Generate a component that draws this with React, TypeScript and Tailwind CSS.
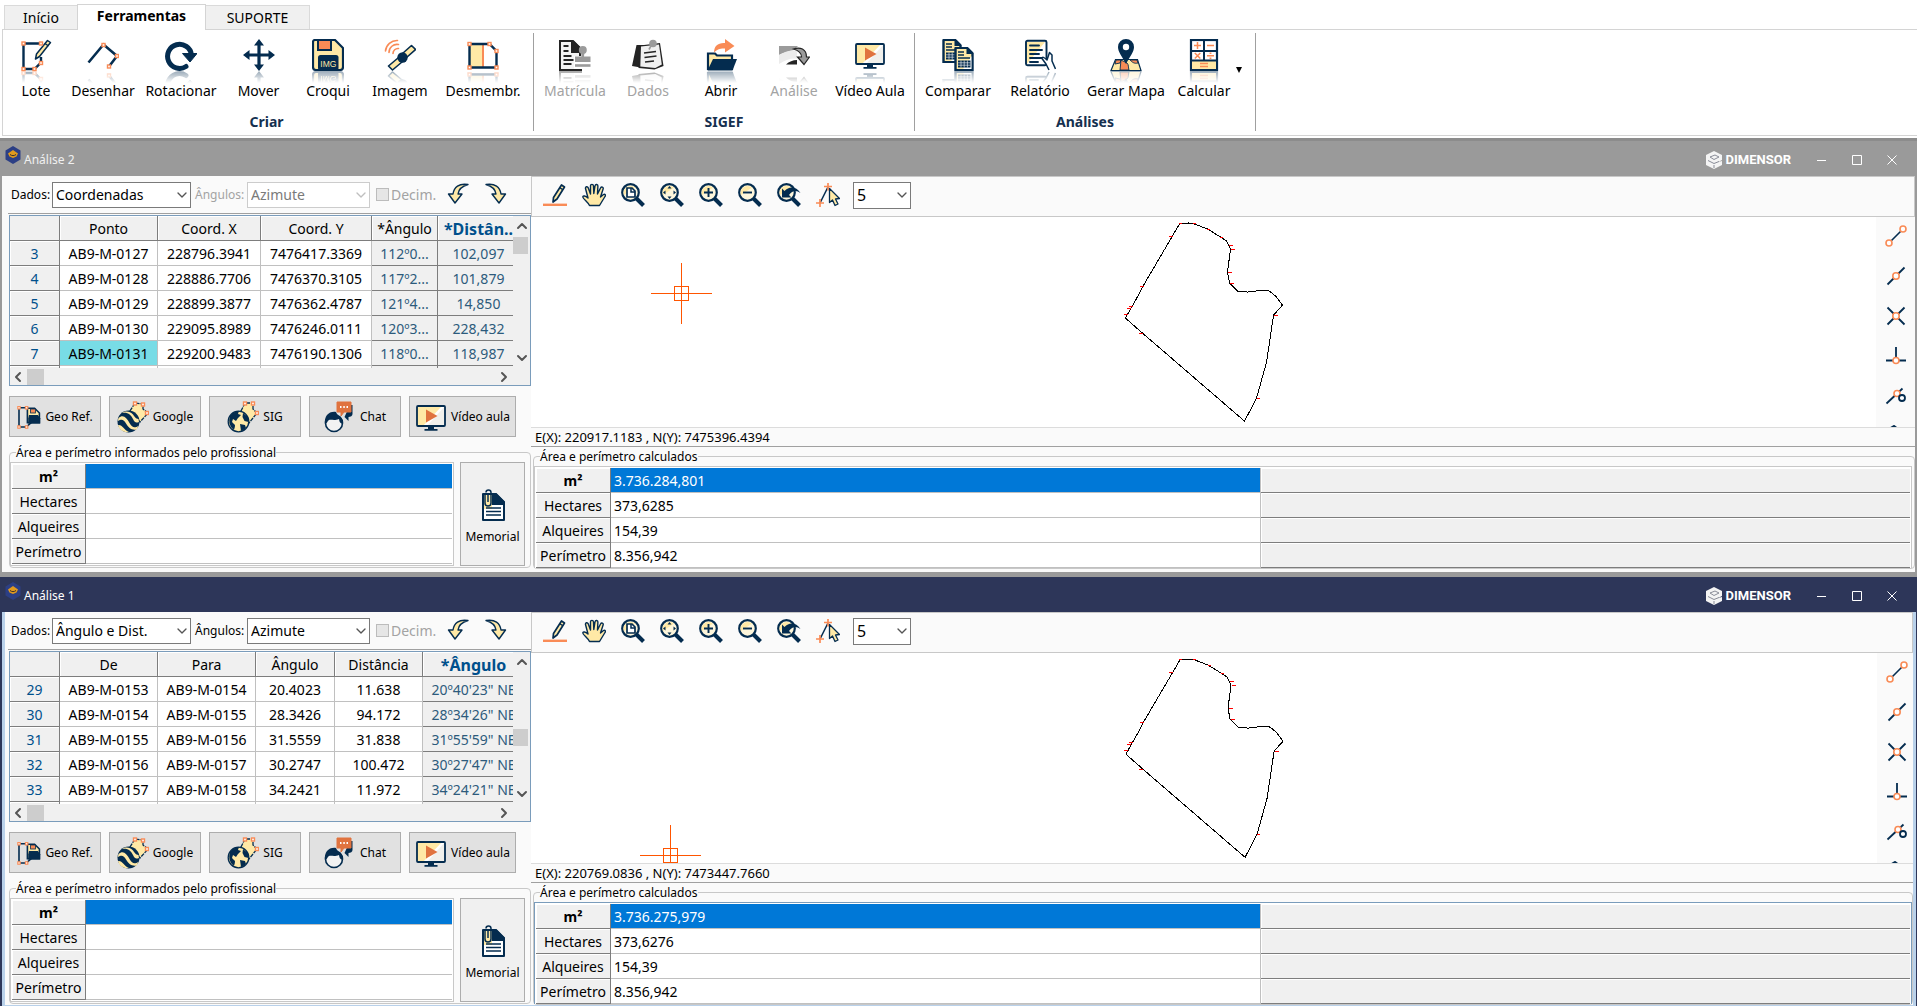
import { type ReactNode } from "react"
import { ChevronDown, ChevronLeft, ChevronRight, ChevronUp } from "lucide-react"
import clsx from "clsx"

const NAVY = "#042c4f"
const YELLOW = "#ffe9a6"
const ORANGE = "#f98b56"

/* ---------- icons ---------- */

interface IconProps {
  className?: string
}

function Svg({ children, className = "size-8", box = 32 }: { children: ReactNode; className?: string; box?: number }) {
  return (
    <svg viewBox={`0 0 ${box} ${box}`} className={clsx("shrink-0", className)} fill="none" aria-hidden="true">
      {children}
    </svg>
  )
}

function Node({ x, y }: { x: number; y: number }) {
  return <rect x={x - 1.5} y={y - 1.5} width="3" height="3" fill="#fff" stroke={ORANGE} strokeWidth="1.4" />
}

function LoteIcon() {
  return (
    <Svg>
      <path d="M21 4.500H3.500V30h11l6.500-6.500V18" stroke={NAVY} strokeWidth="2.400" />
      <path d="M27.500 1.500l3 2L19.500 17.500l-4 2.500 1-5z" fill={YELLOW} stroke={NAVY} strokeWidth="1.500" strokeLinejoin="round" />
      <path d="M25 4.500l3.500 2.500" stroke={NAVY} strokeWidth="1.500" />
      <Node x={3.5} y={4.5} />
      <Node x={21} y={4.5} />
      <Node x={3.5} y={30} />
      <Node x={14.5} y={30} />
      <Node x={21} y={24} />
    </Svg>
  )
}

function DesenharIcon() {
  return (
    <Svg>
      <path d="M1.500 23.500L16.500 5.500 30 17l-8 10.500" stroke={NAVY} strokeWidth="2.600" />
      <Node x={16.5} y={6} />
      <Node x={30} y={17} />
      <Node x={22} y={27.5} />
    </Svg>
  )
}

function RotacionarIcon() {
  return (
    <Svg>
      <path d="M21 27.500A12 12 0 1 1 26.500 16" stroke={NAVY} strokeWidth="5" strokeLinecap="round" />
      <path d="M17.500 14.500H32L25 23z" fill={NAVY} stroke={NAVY} strokeLinejoin="round" />
    </Svg>
  )
}

function MoverIcon() {
  return (
    <Svg>
      <path d="M16 5v22M5 16h22" stroke={NAVY} strokeWidth="3.200" />
      <path d="M16 0l5 6.500H11zM16 32l5-6.500H11zM0 16l6.500-5v10zM32 16l-6.500-5v10z" fill={NAVY} />
    </Svg>
  )
}

function CroquiIcon() {
  return (
    <Svg>
      <path d="M3 1h20l8 8v19a3 3 0 0 1-3 3H4a3 3 0 0 1-3-3V3a2 2 0 0 1 2-2z" fill={YELLOW} stroke={NAVY} strokeWidth="2.200" />
      <path d="M6 1h13v10H6z" fill={ORANGE} stroke={NAVY} strokeWidth="2" />
      <rect x="6" y="16" width="20.500" height="15.500" rx="2.500" fill={NAVY} />
      <text x="16.300" y="27.500" fontSize="8.500" textAnchor="middle" fill={YELLOW} fontFamily="Liberation Sans, sans-serif">
        IMG
      </text>
    </Svg>
  )
}

function ImagemIcon() {
  return (
    <Svg>
      <path d="M1.500 12A11.500 11.500 0 0 1 13.500 1.500M5 13.500A8 8 0 0 1 14.500 5.500M9 14.500a5 5 0 0 1 5.500-5" stroke={ORANGE} strokeWidth="1.600" strokeLinecap="round" />
      <path d="M27.500 6.500l4 4-9 8-4-4zM14 19l4 4-9.500 8-4-4z" fill={YELLOW} stroke={NAVY} strokeWidth="1.600" strokeLinejoin="round" />
      <circle cx="18.500" cy="18.500" r="5.200" fill={NAVY} />
    </Svg>
  )
}

function DesmembrIcon() {
  return (
    <Svg>
      <path d="M3 5h12v23.500H3z" fill={YELLOW} />
      <path d="M16 5v23.500" stroke={ORANGE} strokeWidth="2" />
      <path d="M2.500 5H22.500l7 7V28.500h-27z" stroke={NAVY} strokeWidth="2.400" />
      <Node x={2.5} y={5} />
      <Node x={22.5} y={5} />
      <Node x={29.5} y={12} />
      <Node x={29.5} y={28.5} />
      <Node x={2.5} y={28.5} />
    </Svg>
  )
}

function MatriculaIcon() {
  return (
    <Svg>
      <path d="M1 2h13l7 7v22H1z" fill="#f4f4f4" stroke="#242424" strokeWidth="2" />
      <path d="M12 2h3l7 7v5H12z" fill="#242424" />
      <path d="M4.500 7h5M4.500 12h5M4.500 17h8M4.500 21h10M4.500 25h8" stroke="#242424" strokeWidth="2" />
      <path d="M15 17h17v15H15z" fill="#fff" />
      <path d="M22 13h3.500l-.5 4.500h6.500v5.500H16v-5.500h6.500z" fill="#9b9b9b" />
      <circle cx="23.800" cy="11" r="4" fill="#9b9b9b" />
      <path d="M16 26.500h15.500" stroke="#9b9b9b" strokeWidth="2.600" />
      <path d="M15 31h8" stroke="#242424" strokeWidth="2" />
    </Svg>
  )
}

function DadosIcon() {
  return (
    <Svg>
      <path d="M4.500 6l8 0-1 23L0 27z" fill="#242424" />
      <path d="M8 6.500l20-2.500 3.500 23-9 3.500-16-1.500z" fill="#242424" />
      <path d="M9 7.500l18-2 2.800 20-6.500 3.500-15-1.500z" fill="#f0f0f0" />
      <path d="M12 14l12-1.500M12.500 18.500l12-1.500M13 23l9-1" stroke="#242424" strokeWidth="1.700" />
      <circle cx="21" cy="4.500" r="3.800" fill="#9b9b9b" />
      <path d="M20 5l-3 5.500" stroke="#9b9b9b" strokeWidth="1.600" />
    </Svg>
  )
}

function AbrirIcon() {
  return (
    <Svg>
      <path d="M3 14.500h7l2 2h15V30H3z" fill={YELLOW} stroke={NAVY} strokeWidth="2.200" />
      <path d="M8 20h24l-4.500 11.500H2.500z" fill={NAVY} />
      <path d="M9 13.500C9 7 13 3.500 20 4V0l9.500 7-9.500 6.500v-4c-4 0-7 0-11 4z" fill={ORANGE} />
    </Svg>
  )
}

function AnaliseIcon() {
  return (
    <Svg>
      <path d="M1 7h19l-4 4C10 12 5 14 1 16z" fill="#9b9b9b" />
      <path d="M1 16c5-3 10-5 18-4.500v8C12 19 7 21 1 25z" fill="#ececec" />
      <path d="M8 25.500c3-3 7-4.500 11-4.500v4.500z" fill="#242424" />
      <path d="M15.500 10C22 7.500 28.500 10 28.500 18h3L26 25.500 19.500 18h4c0-4-3-6.500-8-8z" fill="#9b9b9b" stroke="#242424" strokeWidth="1.200" />
    </Svg>
  )
}

function VideoIcon({ className }: IconProps) {
  return (
    <Svg className={className}>
      <rect x="2" y="5" width="28" height="20" rx="1" fill="#fff" />
      <path d="M2 5h25L8 25H2z" fill={YELLOW} />
      <path d="M30 5L12 25h18z" fill="#f0f0ec" />
      <rect x="2" y="5" width="28" height="20" rx="1" stroke={NAVY} strokeWidth="1.800" />
      <path d="M11 8.500L22.500 15 11 21.500z" fill="#e0733f" />
      <path d="M13 25h6v3h3.500v1.800h-13V28H13z" fill={NAVY} />
    </Svg>
  )
}

function Sheet({ x, y }: { x: number; y: number }) {
  return (
    <g transform={`translate(${x} ${y})`}>
      <path d="M1 1h12l5 5v17H1z" fill={YELLOW} stroke={NAVY} strokeWidth="1.900" />
      <path d="M18 8v15H8z" fill="#fff" />
      <path d="M12 0l7 7h-7z" fill={NAVY} />
      <path d="M3.500 5h6M3.500 8h6M3.500 11h12" stroke={NAVY} strokeWidth="1.300" />
      <path d="M3.500 13.500h12.500v7H3.500z" fill={NAVY} />
      <path d="M3.500 15.800h12.500M3.500 18.200h12.500M6.500 13.500v7M9.700 13.500v7M12.900 13.500v7" stroke="#fff" strokeWidth=".6" />
      <path d="M18 6v17H1V1" stroke={NAVY} strokeWidth="1.900" />
    </g>
  )
}

function CompararIcon() {
  return (
    <Svg>
      <Sheet x={0.5} y={0} />
      <Sheet x={12.5} y={8} />
    </Svg>
  )
}

function RelatorioIcon() {
  return (
    <Svg>
      <rect x="2" y="1.800" width="20.500" height="24.500" rx="1.500" fill="#fff" stroke={NAVY} strokeWidth="1.900" />
      <path d="M3 3h18L3 25z" fill={YELLOW} />
      <path d="M6 6.500h9M6 11h12M6 15h9M6 19h12M6 23h8" stroke={NAVY} strokeWidth="1.900" strokeLinecap="round" />
      <path d="M25 31l-3-6-4-5.500c0-2 2-1.500 5 1.500l2.500-7.500L28 16v6l3.500 8" fill="#fff" stroke={NAVY} strokeWidth="1.500" strokeLinejoin="round" />
    </Svg>
  )
}

function MapaIcon() {
  return (
    <Svg>
      <path d="M5.500 20.500h22L31 31.500H1z" fill={YELLOW} stroke={NAVY} strokeWidth="1.200" />
      <path d="M11 21l-1 10h9c-1-3 0-5-2-7zM6 21h5l-1 3-5 1zM20 21h7l1 3c-4 1-6-1-8-3z" fill={ORANGE} stroke={NAVY} strokeWidth=".9" />
      <path d="M16 25C12 17 8 13 8 8a8 8 0 0 1 16 0c0 5-4 9-8 17z" fill={NAVY} />
      <circle cx="16" cy="8" r="3.200" fill="#fff" />
    </Svg>
  )
}

function CalcularIcon() {
  return (
    <Svg>
      <rect x="3" y="1" width="26" height="30" fill="#fff" stroke={NAVY} strokeWidth="2.200" />
      <path d="M4 22h24v8H4z" fill={YELLOW} />
      <path d="M3 12h26M3 21.500h26M16 1v20.500" stroke={NAVY} strokeWidth="2" />
      <path d="M9.500 3v7M6 6.500h7M19 6.500h7M6.800 14l5.500 5.500M12.300 14l-5.500 5.500M19 16.800h7M12 24.500h8M12 27.500h8" stroke={ORANGE} strokeWidth="1.500" />
      <path d="M22.500 13.500v1.600M22.500 18.500v1.600" stroke={ORANGE} strokeWidth="1.800" />
    </Svg>
  )
}

function GeoRefIcon() {
  return (
    <Svg className="size-6" box={30}>
      <path d="M12 3.500H2.500v24h9l7-6" stroke={NAVY} strokeWidth="2" />
      <path d="M13 4h9l6 6v12H13z" fill={YELLOW} stroke={NAVY} strokeWidth="2" />
      <path d="M15 12.500h11l3 4v6.500H14V17z" fill={NAVY} />
      <rect x="17" y="5" width="6" height="5" fill={ORANGE} stroke={NAVY} />
      <Node x={2.5} y={3.5} />
      <Node x={12} y={3.5} />
      <Node x={2.5} y={27.5} />
      <Node x={12} y={27.5} />
    </Svg>
  )
}

function GoogleEarthIcon() {
  return (
    <Svg>
      <path d="M13 10l5-8 8 1v5l5 4-8 9z" fill={YELLOW} stroke={NAVY} strokeWidth="1.300" strokeDasharray="4 1" />
      <circle cx="11.500" cy="20.500" r="11" fill={NAVY} />
      <path d="M1.500 17c5-4 8 0 11 5s5 5 9 3l-2 3.500c-5 1-8-2-10.500-6S5 18 .8 20zM5 12c6-1 9 2 11 6s3 4 6 3l-.5-3c-3 0-4-3-6-5S9 9 5 12z" fill={YELLOW} />
      <path d="M1 24c4-1 6 5 11 7-6 1-10-3-11-7z" fill={YELLOW} />
      <Node x={18} y={2.5} />
      <Node x={26} y={3.5} />
      <Node x={30} y={12} />
    </Svg>
  )
}

function GlobeIcon() {
  return (
    <Svg>
      <path d="M14 10l4-8 8 0v6l4 4-8 10z" fill={YELLOW} stroke={NAVY} strokeWidth="1.300" strokeDasharray="4 1" />
      <circle cx="11.500" cy="20.500" r="10.300" fill={YELLOW} stroke={NAVY} strokeWidth="1.300" />
      <path d="M3 15c2-3 5-5 9-5l-1 3 3 1-3 3-2 3-3-2-1 3 3 3c0 3-1 4-1 5-4-3-6-8-4-14zM16 12l5 4 .5 5-4-1-2-4zM13 23l5 1 1 3c-2 2-4 3-5 3z" fill={NAVY} />
      <Node x={18} y={2.5} />
      <Node x={26} y={2.5} />
      <Node x={30} y={12} />
    </Svg>
  )
}

function ChatIcon() {
  return (
    <Svg>
      <path d="M26 4h2.500v9c0 2-2 3-4 3v4l-4-4" fill={NAVY} />
      <path d="M13 1h14v10h-7l-3 4v-4h-4z" fill="#e0733f" stroke="#e0733f" strokeLinejoin="round" />
      <path d="M16 6h1.500M19.300 6h1.500M22.500 6H24" stroke="#fff" strokeWidth="1.800" />
      <circle cx="10" cy="22" r="8.500" fill="#f2f2f2" stroke={NAVY} strokeWidth="1.600" />
      <path d="M1 23c-1-8 4-13 11-12l2 4c3 0 5 3 4.500 8-3-1-3-3-3.500-5-5 2-8 0-10 1-2 1-1 3-4 4z" fill={NAVY} />
    </Svg>
  )
}

function MemorialIcon() {
  return (
    <Svg>
      <path d="M6 5h13l8 8v18H6z" fill="#fff" stroke={NAVY} strokeWidth="2" strokeLinejoin="round" />
      <path d="M7 6h8v14H7z" fill={YELLOW} />
      <path d="M15 4h4l9 9v3H15z" fill={NAVY} />
      <path d="M9 19h15M9 22.500h15M9 26h15" stroke={NAVY} strokeWidth="1.700" />
      <path d="M8 5v9a3 3 0 0 0 6 0V3.500a2.500 2.500 0 0 0-5 0" stroke={NAVY} strokeWidth="1.500" />
      <path d="M11 5v8" stroke={NAVY} strokeWidth="1.500" />
    </Svg>
  )
}

function UndoIcon() {
  return (
    <Svg className="size-6" box={24}>
      <path d="M22 2.500C13 1 8 5 7 12H2.500l6.500 9L16 12h-4c.5-4 3-7.500 10-9.500z" fill={YELLOW} stroke={NAVY} strokeWidth="1.400" strokeLinejoin="round" />
    </Svg>
  )
}

function RedoIcon() {
  return (
    <Svg className="size-6" box={24}>
      <path d="M2 2.500C11 1 16 5 17 12h4.500L15 21l-7-9h4c-.5-4-3-7.500-10-9.500z" fill={YELLOW} stroke={NAVY} strokeWidth="1.400" strokeLinejoin="round" />
    </Svg>
  )
}

function PencilIcon() {
  return (
    <Svg className="size-6" box={24}>
      <path d="M18.500 2l3 2L14 16l-4 3 .5-4.500z" fill={YELLOW} stroke={NAVY} strokeWidth="1.700" strokeLinejoin="round" />
      <path d="M16.500 4.500l3 2" stroke={NAVY} strokeWidth="1.500" />
      <path d="M0 21.800h24" stroke={ORANGE} strokeWidth="2.400" />
    </Svg>
  )
}

function HandIcon() {
  return (
    <Svg className="size-6" box={24}>
      <path
        d="M7.500 22.500C6 19 1 16 .8 14c.2-1.700 2.500-1.300 5.200 1L3.500 5.500c-.3-2 2-2.500 2.700-.7L8.500 11V3c0-2.200 2.800-2.200 3 0l.3 7.500L13 2.800c.5-2 3-1.600 2.900.3L15.500 11l3-6c1-1.800 3.200-.8 2.600 1L18.500 14l3-2.500c1.500-1 2.500.6 1.500 2L17.500 22.500z"
        fill={YELLOW}
        stroke={NAVY}
        strokeWidth="1.400"
        strokeLinejoin="round"
      />
    </Svg>
  )
}

function Lens({ children }: { children: ReactNode }) {
  return (
    <Svg className="size-6" box={24}>
      <path d="M15.500 15.500l7 7" stroke={NAVY} strokeWidth="4" />
      <circle cx="9.500" cy="9.500" r="8.300" fill="#fdf6dc" stroke={NAVY} strokeWidth="2.200" />
      <path d="M3 12A7 7 0 0 1 14 4.500z" fill={YELLOW} />
      {children}
    </Svg>
  )
}

function CursorIcon() {
  return (
    <Svg className="size-6" box={24}>
      <path d="M4 20L12 4" stroke={NAVY} strokeWidth="1.500" />
      <path d="M8 3.500h8M12 0v7.500M0 20h8M4 16v8" stroke={ORANGE} strokeWidth="1.700" />
      <path d="M13.500 5.500v14l3-2.500 2.500 5.500 3-1.500-2.500-5 4-.5z" fill={YELLOW} stroke={NAVY} strokeWidth="1.300" strokeLinejoin="round" />
    </Svg>
  )
}

const snapIcons = [
  <>
    <path d="M5 17L18 4" stroke={NAVY} strokeWidth="1.600" />
    <circle cx="4" cy="18" r="3" stroke={ORANGE} strokeWidth="1.600" fill="#fff" />
    <circle cx="18" cy="4" r="3" stroke={ORANGE} strokeWidth="1.600" fill="#fff" />
  </>,
  <>
    <path d="M2.500 19.500l17-17" stroke={NAVY} strokeWidth="1.800" />
    <circle cx="11" cy="11" r="3.200" stroke={ORANGE} strokeWidth="1.600" fill="#fff" />
  </>,
  <>
    <path d="M2.500 19.500l17-17M2.500 2.500l17 17" stroke={NAVY} strokeWidth="1.800" />
    <circle cx="11" cy="11" r="3.200" stroke={ORANGE} strokeWidth="1.600" fill="#fff" />
  </>,
  <>
    <path d="M11 2v11M1 15.500h20" stroke={NAVY} strokeWidth="1.800" />
    <circle cx="11" cy="15.500" r="3" stroke={ORANGE} strokeWidth="1.600" fill="#fff" />
  </>,
  <>
    <path d="M1.500 18.500l16-15" stroke={NAVY} strokeWidth="1.800" />
    <circle cx="12" cy="8.500" r="3" stroke={ORANGE} strokeWidth="1.600" fill="#fff" />
    <circle cx="17" cy="13" r="3" stroke={NAVY} strokeWidth="1.800" fill="#fff" />
  </>,
  <>
    <path d="M4 4l5-3 4 3" stroke={NAVY} strokeWidth="2" />
  </>,
]

/* ---------- ribbon ---------- */

interface RibbonItem {
  label: string
  icon: ReactNode
  width: string
  disabled?: boolean
}

const criar: RibbonItem[] = [
  { label: "Lote", icon: <LoteIcon />, width: "w-[60px]" },
  { label: "Desenhar", icon: <DesenharIcon />, width: "w-[74px]" },
  { label: "Rotacionar", icon: <RotacionarIcon />, width: "w-[82px]" },
  { label: "Mover", icon: <MoverIcon />, width: "w-[73px]" },
  { label: "Croqui", icon: <CroquiIcon />, width: "w-[66px]" },
  { label: "Imagem", icon: <ImagemIcon />, width: "w-[78px]" },
  { label: "Desmembr.", icon: <DesmembrIcon />, width: "w-[88px]" },
]

const sigef: RibbonItem[] = [
  { label: "Matrícula", icon: <MatriculaIcon />, width: "w-[82px]", disabled: true },
  { label: "Dados", icon: <DadosIcon />, width: "w-16", disabled: true },
  { label: "Abrir", icon: <AbrirIcon />, width: "w-[82px]" },
  { label: "Análise", icon: <AnaliseIcon />, width: "w-16", disabled: true },
  { label: "Vídeo Aula", icon: <VideoIcon />, width: "w-[88px]" },
]

const analises: RibbonItem[] = [
  { label: "Comparar", icon: <CompararIcon />, width: "w-[86px]" },
  { label: "Relatório", icon: <RelatorioIcon />, width: "w-[78px]" },
  { label: "Gerar Mapa", icon: <MapaIcon />, width: "w-[94px]" },
  { label: "Calcular", icon: <CalcularIcon />, width: "w-[62px]" },
]

function RibbonButton({ item }: { item: RibbonItem }) {
  return (
    <button
      type="button"
      disabled={item.disabled}
      className={clsx("flex flex-col items-center whitespace-nowrap text-sm", item.width, item.disabled && "text-[#a3a3a3]")}
    >
      {item.icon}
      <span className="h-3 overflow-hidden opacity-40 [mask-image:linear-gradient(black,transparent)]">
        <span className="block -scale-y-100">{item.icon}</span>
      </span>
      <span className="-mt-0.5 leading-5">{item.label}</span>
    </button>
  )
}

interface RibbonGroupProps {
  title: string
  items: RibbonItem[]
  className?: string
  children?: ReactNode
}

function RibbonGroup({ title, items, className, children }: RibbonGroupProps) {
  return (
    <section className={clsx("mt-[3px] mb-1 flex flex-col justify-between border-r border-[#a0a0a0] pt-1.5", className)}>
      <div className="flex">
        {items.map((item) => (
          <RibbonButton key={item.label} item={item} />
        ))}
        {children}
      </div>
      <h2 className="text-center text-sm leading-[18px] font-bold text-[#15304f]">{title}</h2>
    </section>
  )
}

function Ribbon() {
  return (
    <header>
      <nav className="flex items-end pt-1 pl-1 text-sm">
        <button type="button" className="h-6 w-[73px] border-t border-l border-[#dadada] bg-[#f0f0f0]">
          Início
        </button>
        <button type="button" className="relative z-10 -mb-px h-[26px] w-[129px] border border-b-0 border-[#d4d4d4] bg-white pb-1 font-bold">
          Ferramentas
        </button>
        <button type="button" className="h-6 w-[104px] border-t border-r border-[#dadada] bg-[#f0f0f0]">
          SUPORTE
        </button>
      </nav>
      <div className="ml-0.5 flex h-[107px] border-y border-l border-[#d4d4d4] pl-[3px]">
        <RibbonGroup title="Criar" items={criar} className="pr-1.5" />
        <RibbonGroup title="SIGEF" items={sigef} />
        <RibbonGroup title="Análises" items={analises}>
          <button type="button" aria-label="Mais cálculos" className="flex w-5 justify-start pt-7 pl-px">
            <svg viewBox="0 0 6 6" className="size-1.5" aria-hidden="true">
              <path d="M0 0h6L3 6z" fill="#000" />
            </svg>
          </button>
        </RibbonGroup>
      </div>
    </header>
  )
}

/* ---------- analysis window ---------- */

interface ComboProps {
  id: string
  value: string
  className: string
  label?: string
  disabled?: boolean
}

function Combo({ id, value, className, label, disabled }: ComboProps) {
  return (
    <div className={clsx("relative", className)}>
      <select
        id={id}
        aria-label={label}
        disabled={disabled}
        defaultValue={value}
        className="size-full appearance-none border border-[#7a7a7a] bg-white pl-[3px] disabled:border-[#cccccc] disabled:text-[#7a7a7a]"
      >
        <option>{value}</option>
      </select>
      <ChevronDown
        className={clsx("pointer-events-none absolute top-1/2 right-px size-4 -translate-y-1/2", disabled ? "text-[#bfbfbf]" : "text-[#555]")}
        strokeWidth={2}
      />
    </div>
  )
}

interface Column {
  title: string
  width: string
  computed?: boolean
}

interface Analysis {
  id: string
  title: string
  active: boolean
  dados: string
  columns: Column[]
  rows: string[][]
  selected?: string
  thumb: string
  position: string
  cursor: [number, number]
  totals: string[]
}

const unidades = ["m²", "Hectares", "Alqueires", "Perímetro"]

function PointsGrid({ data }: { data: Analysis }) {
  return (
    <div className="mt-px border border-[#7a9cbb] bg-[#f0f0f0]">
      <div className="flex h-[152px]">
        <div className="min-w-0 flex-1 overflow-hidden">
          <table className="w-max table-fixed border-separate border-spacing-0 text-center text-sm whitespace-nowrap">
            <thead>
              <tr>
                <th className="h-[25px] w-[50px] border-r border-b border-[#7d7d7d] p-0" />
                {data.columns.map((column, i) => (
                  <th
                    key={column.title}
                    className={clsx(
                      "h-[25px] border-r border-b border-[#7d7d7d] p-0 pt-0.5 leading-5 shadow-[inset_1px_1px_0_white]",
                      column.width,
                      i === data.columns.length - 1 ? "text-base font-bold text-[#00508c]" : "font-normal",
                    )}
                  >
                    {column.title}
                  </th>
                ))}
              </tr>
            </thead>
            <tbody>
              {data.rows.map((row) => (
                <tr key={row[0]}>
                  <th className="h-[25px] border-r border-b border-[#7d7d7d] p-0 pt-0.5 leading-5 font-normal text-[#00508c] shadow-[inset_1px_1px_0_white]">
                    {row[0]}
                  </th>
                  {row.slice(1).map((cell, i) => (
                    <td
                      key={i}
                      className={clsx(
                        "h-[25px] border-r border-b p-0 pt-0.5 leading-5",
                        data.columns[i].computed ? "border-[#7d7d7d] bg-[#f0f0f0] text-[#2d5b7c]" : "border-[#c0c0c0]",
                        !data.columns[i].computed && (cell === data.selected ? "bg-[#78dce6]" : "bg-white"),
                      )}
                    >
                      {cell}
                    </td>
                  ))}
                </tr>
              ))}
            </tbody>
          </table>
        </div>
        <div className="flex w-[17px] flex-col items-center justify-between py-0.5 text-[#555]">
          <ChevronUp className="size-4" strokeWidth={3} />
          <div className="relative w-full flex-1">
            <div className={clsx("absolute h-[17px] w-[15px] bg-[#cdcdcd]", data.thumb)} />
          </div>
          <ChevronDown className="size-4" strokeWidth={3} />
        </div>
      </div>
      <div className="flex h-[17px] items-center pr-4 text-[#555]">
        <ChevronLeft className="size-4" strokeWidth={3} />
        <div className="ml-px h-4 w-[17px] bg-[#cdcdcd]" />
        <ChevronRight className="mr-0.5 ml-auto size-4" strokeWidth={3} />
      </div>
    </div>
  )
}

function ToolButton({ icon, children, wide }: { icon: ReactNode; children: ReactNode; wide?: boolean }) {
  return (
    <button
      type="button"
      className={clsx(
        "flex h-[41px] items-center justify-center gap-1 border border-[#adadad] bg-[#e1e1e1] text-xs whitespace-nowrap",
        wide ? "w-[107px]" : "w-[92px]",
      )}
    >
      {icon}
      {children}
    </button>
  )
}

function UnitHeader({ unit }: { unit: string }) {
  return (
    <th
      scope="row"
      className={clsx(
        "h-[25px] border-r border-b border-[#7d7d7d] bg-[#f0f0f0] p-0 pt-0.5 text-center leading-5 shadow-[inset_1px_1px_0_white]",
        unit === "m²" ? "font-bold" : "font-normal",
      )}
    >
      {unit}
    </th>
  )
}

function InputPane({ data }: { data: Analysis }) {
  return (
    <div className={clsx("shrink-0", data.active ? "w-[526px] pl-1" : "w-[529px] pl-[7px]")}>
      <div className="-ml-px flex h-[38px] items-center border-b border-[#a0a0a0] pl-[3px] text-xs">
        <label htmlFor={`${data.id}-dados`} className="w-[41px] whitespace-nowrap">
          Dados:
        </label>
        <Combo id={`${data.id}-dados`} value={data.dados} className="h-[26px] w-[139px] text-sm" />
        <label
          htmlFor={`${data.id}-angulos`}
          className={clsx("ml-1 w-[52px] whitespace-nowrap", !data.active && "text-[#a3a3a3]")}
        >
          Ângulos:
        </label>
        <Combo id={`${data.id}-angulos`} value="Azimute" disabled={!data.active} className="h-[26px] w-[123px] text-sm" />
        <label className="ml-1.5 flex items-center gap-0.5 text-sm text-[#a3a3a3]">
          <input type="checkbox" disabled className="size-[13px] appearance-none border border-[#bcbcbc] bg-[#e6e6e6]" />
          Decim.
        </label>
        <div className="ml-2.5 flex gap-3.5 pb-0.5">
          <button type="button" aria-label="Desfazer">
            <UndoIcon />
          </button>
          <button type="button" aria-label="Refazer">
            <RedoIcon />
          </button>
        </div>
      </div>
      <PointsGrid data={data} />
      <div className="mt-2.5 flex gap-2">
        <ToolButton icon={<GeoRefIcon />}>Geo Ref.</ToolButton>
        <ToolButton icon={<GoogleEarthIcon />}>Google</ToolButton>
        <ToolButton icon={<GlobeIcon />}>SIG</ToolButton>
        <ToolButton icon={<ChatIcon />}>Chat</ToolButton>
        <ToolButton wide icon={<VideoIcon />}>
          Vídeo aula
        </ToolButton>
      </div>
      <fieldset className="mt-1.5 rounded-sm border border-[#c8c8c8] pb-px">
        <legend className="ml-1.5 pt-0.5 text-xs leading-4">Área e perímetro informados pelo profissional</legend>
        <div className="flex gap-1.5 pt-px pr-[5px]">
          <div className="flex-1 border border-[#c8c8c8] bg-white p-px">
            <table className="w-full table-fixed border-separate border-spacing-0 text-sm">
              <tbody>
                {unidades.map((unit, i) => (
                  <tr key={unit}>
                    <UnitHeader unit={unit} />
                    <td className={clsx("h-[25px] w-[366px] border-b border-[#c0c0c0] p-0", i === 0 && "bg-[#0078d7]")} />
                  </tr>
                ))}
              </tbody>
            </table>
          </div>
          <button type="button" className="flex w-[65px] flex-col items-center justify-center gap-2 border border-[#adadad] bg-[#f0f0f0] pt-1.5 text-xs">
            <MemorialIcon />
            Memorial
          </button>
        </div>
      </fieldset>
    </div>
  )
}

const viewTools = [
  { label: "Desenhar", icon: <PencilIcon /> },
  { label: "Mover vista", icon: <HandIcon /> },
  {
    label: "Zoom na página",
    icon: (
      <Lens>
        <path d="M6 5h5l3 3v6H6z" fill="#fff" stroke={NAVY} strokeWidth="1.700" />
        <path d="M10 5v4h4" stroke={NAVY} strokeWidth="1.500" />
      </Lens>
    ),
  },
  {
    label: "Zoom extensão",
    icon: (
      <Lens>
        <path d="M9.500 3l2 2.500h-4zM9.500 16l2-2.500h-4zM3 9.500l2.500-2v4zM16 9.500l-2.500-2v4z" fill={NAVY} />
      </Lens>
    ),
  },
  { label: "Aproximar", icon: <Lens><path d="M9.500 5v9M5 9.500h9" stroke={NAVY} strokeWidth="1.900" /></Lens> },
  { label: "Afastar", icon: <Lens><path d="M5 9.500h9" stroke={NAVY} strokeWidth="1.900" /></Lens> },
  {
    label: "Zoom anterior",
    icon: (
      <Lens>
        <path d="M5 14.500V5.500l2.500 2.500C12 3 19 3 23.500 10c-4-3-8-3-11.500 2l2.500 2.500z" fill={NAVY} />
      </Lens>
    ),
  },
  { label: "Selecionar vértices", icon: <CursorIcon /> },
]

function Plan({ cursor: [cx, cy] }: { cursor: [number, number] }) {
  return (
    <svg
      viewBox="-1 0 1344 210"
      preserveAspectRatio="xMinYMin slice"
      className="h-[210px] min-w-0 flex-1 bg-white"
      shapeRendering="crispEdges"
      fill="none"
      role="img"
      aria-label="Planta do perímetro"
    >
      <path
        d="M647 7L656 6 662 7 675 12 688 20 694 24 698 32 695 55 697 66 705 74 715 75 731 73 737 74 743 79 750 88 741 98 734 145 724 181 712 204 610 116 593 101 606 78 610 70z"
        stroke="#000"
      />
      <path
        d="M636.500 19.500h4M607.500 69.500h4M596.500 89.500h4M594.500 91.500h4M591.500 97.500h4M606.500 116.500h4M674.500 12.500h3M687.500 20.500h3M696.500 28.500h4M698.500 32.500h4M695.500 55.500h4M697.500 66.500h4M741.500 98.500h4M724 181h3M646.500 6.500h3M660.500 6.500h3"
        stroke="#f00"
      />
      <path d={`M${cx - 30} ${cy}.5h61M${cx}.5 ${cy - 30}v61M${cx - 7} ${cy - 7}h14v14h-14z`} stroke="#ff5500" />
    </svg>
  )
}

function CanvasPane({ data }: { data: Analysis }) {
  return (
    <div className="min-w-0 flex-1">
      <div className="flex h-[41px] items-center gap-[15px] border border-[#c8c8c8] pb-[3px] pl-[11px]">
        {viewTools.map((tool) => (
          <button key={tool.label} type="button" aria-label={tool.label}>
            {tool.icon}
          </button>
        ))}
        <Combo id={`${data.id}-escala`} label="Tamanho" value="5" className="-ml-0.5 h-[27px] w-[58px] text-base" />
      </div>
      <div className="flex h-[210px]">
        <Plan cursor={data.cursor} />
        <div className={clsx("flex flex-col items-center gap-[18px] overflow-hidden pt-2", data.active ? "w-9 pl-1" : "w-[39px]")}>
          {snapIcons.map((icon, i) => (
            <button key={i} type="button" aria-label={`Snap ${i + 1}`}>
              <Svg className="size-[22px]" box={22}>
                {icon}
              </Svg>
            </button>
          ))}
        </div>
      </div>
      <p className="h-5 border-t border-b border-t-[#dcdcdc] border-b-[#a0a0a0] pl-1 text-[13px] leading-[18px]">{data.position}</p>
      <fieldset className="ml-0.5 rounded-sm border border-[#c8c8c8]">
        <legend className="ml-1.5 pt-0.5 text-xs leading-4">Área e perímetro calculados</legend>
        <div
          className={clsx(
            "mt-px border border-b-0 bg-white p-px pb-0",
            data.active ? "border-[#7a9cbb]" : "mr-0.5 border-[#c8c8c8]",
          )}
        >
          <table className="w-full table-fixed border-separate border-spacing-0 text-sm">
            <colgroup>
              <col className="w-[75px]" />
              <col className="w-[650px]" />
              <col />
            </colgroup>
            <tbody>
              {unidades.map((unit, i) => (
                <tr key={unit}>
                  <UnitHeader unit={unit} />
                  <td
                    className={clsx(
                      "h-[25px] border-r border-b border-[#c0c0c0] p-0 pt-0.5 pl-[3px] leading-5",
                      i === 0 ? "bg-[#0078d7] text-white" : "bg-white",
                    )}
                  >
                    {data.totals[i]}
                  </td>
                  <td className="border-b border-[#7d7d7d] bg-[#f0f0f0] p-0 shadow-[inset_1px_1px_0_white]" />
                </tr>
              ))}
            </tbody>
          </table>
        </div>
      </fieldset>
    </div>
  )
}

function TitleBar({ data }: { data: Analysis }) {
  return (
    <div className={clsx("flex h-[35px] items-center pt-0.5 pr-5 text-white", data.active ? "bg-[#2d3659]" : "bg-[#9a9a9a]")}>
      <svg viewBox="0 0 16 18" className="mb-2.5 ml-[5px] h-[18px] w-4" aria-hidden="true">
        <path d="M8 0l7.500 4.500v9L8 18 .5 13.500v-9z" fill="#2c3f85" />
        <path d="M8 4l5 3.500-1.500 3L8 12l-3.500-1.500-1.500-3z" fill="#e09a1e" />
        <path d="M5 8.500c2 1.500 4 1.500 6 0" stroke="#3a2f30" fill="none" />
      </svg>
      <h2 className={clsx("ml-[3px] text-xs", !data.active && "text-[#f0f0f0]")}>{data.title}</h2>
      <div className="ml-auto flex items-center gap-1 font-['Roboto',sans-serif] text-[13px] leading-5 font-bold">
        <svg viewBox="0 0 16 18" className="h-[18px] w-4" aria-hidden="true">
          <path d="M8 0l8 4v5l-4 2 4-1v4l-8 4-8-4V4z" fill="#f4f4f4" />
          <path d="M4 6l5-2 4 2-5 2.500zM2 9.500l6 3 5-2M8 14v3" stroke="#8a8d98" fill="none" />
        </svg>
        DIMENSOR
      </div>
      <div className="ml-[26px] flex gap-[25px]">
        <button type="button" aria-label="Minimizar">
          <svg viewBox="0 0 10 10" className="size-2.5" stroke="currentColor" fill="none">
            <path d="M0 5.500h9" />
          </svg>
        </button>
        <button type="button" aria-label="Maximizar">
          <svg viewBox="0 0 10 10" className="size-2.5" stroke="currentColor" fill="none">
            <path d="M.5.500h9v9h-9z" />
          </svg>
        </button>
        <button type="button" aria-label="Fechar">
          <svg viewBox="0 0 10 10" className="size-2.5" stroke="currentColor" fill="none">
            <path d="M.5.500l9 9M9.500.500l-9 9" />
          </svg>
        </button>
      </div>
    </div>
  )
}

function AnalysisWindow({ data }: { data: Analysis }) {
  return (
    <article>
      <TitleBar data={data} />
      <div className={clsx(data.active ? "border-r border-l-2 border-[#2d3659]" : "border-x-2 border-b-[5px] border-[#9a9a9a]")}>
        <div className={clsx("flex bg-[#fafafa]", data.active ? "border-x-[3px] border-b border-[#b9d1ea]" : "pb-[3px]")}>
          <InputPane data={data} />
          <CanvasPane data={data} />
        </div>
      </div>
    </article>
  )
}

const analyses: Analysis[] = [
  {
    id: "analise-2",
    title: "Análise 2",
    active: false,
    dados: "Coordenadas",
    columns: [
      { title: "Ponto", width: "w-[98px]" },
      { title: "Coord. X", width: "w-[103px]" },
      { title: "Coord. Y", width: "w-[111px]" },
      { title: "*Ângulo", width: "w-[66px]", computed: true },
      { title: "*Distân..", width: "w-[82px]", computed: true },
    ],
    rows: [
      ["3", "AB9-M-0127", "228796.3941", "7476417.3369", "112º0...", "102,097"],
      ["4", "AB9-M-0128", "228886.7706", "7476370.3105", "117º2...", "101,879"],
      ["5", "AB9-M-0129", "228899.3877", "7476362.4787", "121º4...", "14,850"],
      ["6", "AB9-M-0130", "229095.8989", "7476246.0111", "120º3...", "228,432"],
      ["7", "AB9-M-0131", "229200.9483", "7476190.1306", "118º0...", "118,987"],
      ["", "", "", "", "", ""],
    ],
    selected: "AB9-M-0131",
    thumb: "top-[3px]",
    position: "E(X): 220917.1183 , N(Y): 7475396.4394",
    cursor: [149, 76],
    totals: ["3.736.284,801", "373,6285", "154,39", "8.356,942"],
  },
  {
    id: "analise-1",
    title: "Análise 1",
    active: true,
    dados: "Ângulo e Dist.",
    columns: [
      { title: "De", width: "w-[98px]" },
      { title: "Para", width: "w-[98px]" },
      { title: "Ângulo", width: "w-[79px]" },
      { title: "Distância", width: "w-[88px]" },
      { title: "*Ângulo", width: "w-[102px]", computed: true },
    ],
    rows: [
      ["29", "AB9-M-0153", "AB9-M-0154", "20.4023", "11.638", `20º40'23" NE`],
      ["30", "AB9-M-0154", "AB9-M-0155", "28.3426", "94.172", `28º34'26" NE`],
      ["31", "AB9-M-0155", "AB9-M-0156", "31.5559", "31.838", `31º55'59" NE`],
      ["32", "AB9-M-0156", "AB9-M-0157", "30.2747", "100.472", `30º27'47" NE`],
      ["33", "AB9-M-0157", "AB9-M-0158", "34.2421", "11.972", `34º24'21" NE`],
      ["", "", "", "", "", ""],
    ],
    thumb: "top-[59px]",
    position: "E(X): 220769.0836 , N(Y): 7473447.7660",
    cursor: [138, 202],
    totals: ["3.736.275,979", "373,6276", "154,39", "8.356,942"],
  },
]

export default function App() {
  return (
    <div className="bg-white font-['Noto_Sans','Open_Sans',sans-serif] text-black">
      <Ribbon />
      <main className="mt-0.5 border-t-[3px] border-[#8c8c8c]">
        {analyses.map((data) => (
          <AnalysisWindow key={data.id} data={data} />
        ))}
      </main>
    </div>
  )
}
